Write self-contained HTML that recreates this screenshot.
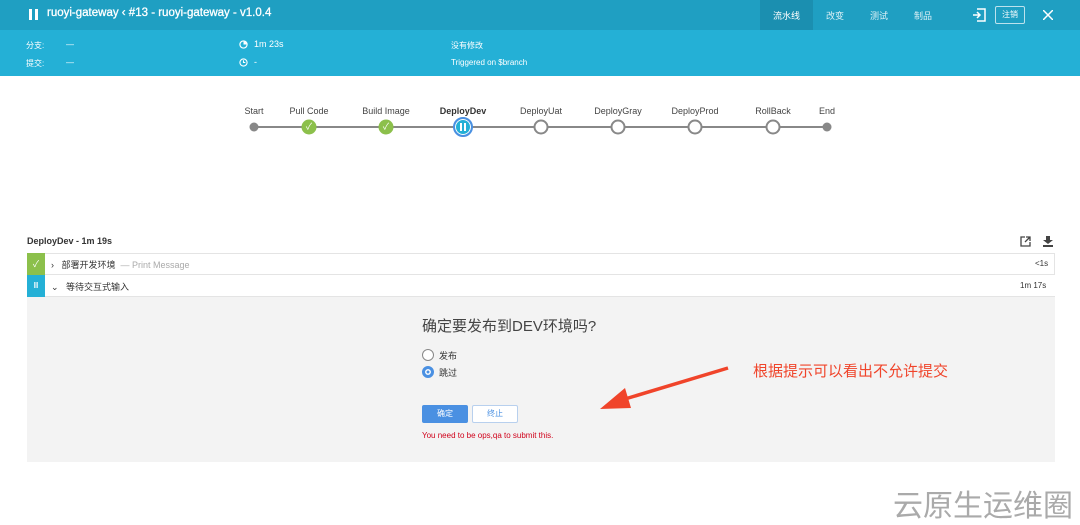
<!DOCTYPE html>
<html><head><meta charset="utf-8"><style>
*{margin:0;padding:0;box-sizing:border-box}
body{width:1080px;height:519px;background:#fff;font-family:"Liberation Sans","Noto Sans CJK SC",sans-serif;position:relative;overflow:hidden;color:#333}
.a{position:absolute;white-space:nowrap}
.top{position:absolute;left:0;top:0;width:1080px;height:30px;background:#1f9fc2}
.sub{position:absolute;left:0;top:30px;width:1080px;height:46px;background:#24b0d6}
.w{color:#fff}
.lbl{font-size:9px;color:#444;transform:translateX(-50%)}
.n{position:absolute;border-radius:50%;transform:translate(-50%,-50%)}
</style></head><body>
<div class="top"></div>
<div class="a" style="left:760px;top:0;width:53px;height:30px;background:#1b8fb0"></div>
<div class="sub"></div>
<div class="a" style="left:29px;top:9px;width:3px;height:11px;background:#fff"></div>
<div class="a" style="left:35px;top:9px;width:3px;height:11px;background:#fff"></div>
<div class="a w" style="left:47px;top:7px;font-size:11.5px;-webkit-text-stroke:0.3px #fff">ruoyi-gateway &lsaquo; #13 - ruoyi-gateway - v1.0.4</div>
<div class="a w" style="left:773px;top:9px;font-size:9px">流水线</div>
<div class="a w" style="left:826px;top:9px;font-size:9px;opacity:.85">改变</div>
<div class="a w" style="left:870px;top:9px;font-size:9px;opacity:.85">测试</div>
<div class="a w" style="left:914px;top:9px;font-size:9px;opacity:.85">制品</div>
<svg class="a" style="left:972px;top:8px" width="14" height="14" viewBox="0 0 14 14" fill="none" stroke="#fff" stroke-width="1.5"><path d="M5 1h8v12H5M1 7h7M5 4l3 3-3 3"/></svg>
<div class="a w" style="left:995px;top:6px;width:30px;height:18px;border:1px solid rgba(255,255,255,.7);border-radius:2px;font-size:8px;text-align:center;line-height:16px">注销</div>
<svg class="a" style="left:1043px;top:10px" width="10" height="10" viewBox="0 0 10 10" stroke="#fff" stroke-width="1.5"><path d="M0 0L10 10M10 0L0 10"/></svg>
<div class="a w" style="left:26px;top:40px;font-size:8px">分支:</div>
<div class="a w" style="left:66px;top:40px;font-size:8px">—</div>
<div class="a w" style="left:26px;top:58px;font-size:8px">提交:</div>
<div class="a w" style="left:66px;top:58px;font-size:8px">—</div>
<svg class="a" style="left:239px;top:40px" width="9" height="9" viewBox="0 0 10 10"><circle cx="5" cy="5" r="4" fill="none" stroke="#fff" stroke-width="1.3"/><path d="M5 5V1.5A3.5 3.5 0 0 1 8.5 5z" fill="#fff"/></svg>
<div class="a w" style="left:254px;top:39px;font-size:9px">1m 23s</div>
<svg class="a" style="left:239px;top:58px" width="9" height="9" viewBox="0 0 10 10" fill="none" stroke="#fff" stroke-width="1.2"><circle cx="5" cy="5" r="4"/><path d="M5 2.5V5h2"/></svg>
<div class="a w" style="left:254px;top:57px;font-size:9px">-</div>
<div class="a w" style="left:451px;top:40px;font-size:8px">没有修改</div>
<div class="a w" style="left:451px;top:58px;font-size:8px">Triggered on $branch</div>

<div class="a" style="left:254px;top:126px;width:573px;height:2px;background:#888"></div>
<div class="a lbl" style="left:254px;top:106px">Start</div>
<div class="a lbl" style="left:309px;top:106px">Pull Code</div>
<div class="a lbl" style="left:386px;top:106px">Build Image</div>
<div class="a lbl" style="left:463px;top:106px;font-weight:bold;color:#333">DeployDev</div>
<div class="a lbl" style="left:541px;top:106px">DeployUat</div>
<div class="a lbl" style="left:618px;top:106px">DeployGray</div>
<div class="a lbl" style="left:695px;top:106px">DeployProd</div>
<div class="a lbl" style="left:773px;top:106px">RollBack</div>
<div class="a lbl" style="left:827px;top:106px">End</div>
<div class="n" style="left:254px;top:127px;width:9px;height:9px;background:#888"></div>
<div class="n" style="left:827px;top:127px;width:9px;height:9px;background:#888"></div>
<div class="n" style="left:309px;top:127px;width:15px;height:15px;background:#8cc04b;color:#fff;font-size:9px;text-align:center;line-height:15px">✓</div>
<div class="n" style="left:386px;top:127px;width:15px;height:15px;background:#8cc04b;color:#fff;font-size:9px;text-align:center;line-height:15px">✓</div>
<div class="n" style="left:463px;top:127px;width:20px;height:20px;background:#24b0d6;border:2px solid #4a90e2;box-shadow:0 0 0 1px #fff inset"></div>
<div class="a" style="left:460px;top:123px;width:2px;height:8px;background:#fff"></div>
<div class="a" style="left:464px;top:123px;width:2px;height:8px;background:#fff"></div>
<div class="n" style="left:541px;top:127px;width:15px;height:15px;background:#fff;border:2px solid #888"></div>
<div class="n" style="left:618px;top:127px;width:15px;height:15px;background:#fff;border:2px solid #888"></div>
<div class="n" style="left:695px;top:127px;width:15px;height:15px;background:#fff;border:2px solid #888"></div>
<div class="n" style="left:773px;top:127px;width:15px;height:15px;background:#fff;border:2px solid #888"></div>

<div class="a" style="left:27px;top:236px;font-size:9px;font-weight:bold">DeployDev - 1m 19s</div>
<svg class="a" style="left:1020px;top:236px" width="11" height="11" viewBox="0 0 11 11" fill="none" stroke="#444" stroke-width="1.3"><path d="M5 1H1v9h9V6M6 1h4v4M10 1L5 6"/></svg>
<svg class="a" style="left:1043px;top:236px" width="10" height="11" viewBox="0 0 10 11" fill="#444"><path d="M3 0h4v4h3L5 8 0 4h3zM0 9h10v2H0z"/></svg>
<div class="a" style="left:27px;top:253px;width:1028px;height:22px;border:1px solid #e4e4e4;border-left:none"></div>
<div class="a" style="left:27px;top:253px;width:18px;height:22px;background:#8cc04b;color:#fff;font-size:9px;text-align:center;line-height:22px">✓</div>
<div class="a" style="left:51px;top:258px;font-size:9px">›&nbsp;&nbsp; 部署开发环境 <span style="color:#aaa">&nbsp;— Print Message</span></div>
<div class="a" style="left:1035px;top:259px;font-size:8px">&lt;1s</div>
<div class="a" style="left:27px;top:275px;width:1028px;height:22px;border-bottom:1px solid #e4e4e4"></div>
<div class="a" style="left:27px;top:275px;width:18px;height:22px;background:#24b0d6;color:#fff;font-size:8px;text-align:center;line-height:22px;font-weight:bold">II</div>
<div class="a" style="left:51px;top:280px;font-size:9px">⌄&nbsp;&nbsp; 等待交互式输入</div>
<div class="a" style="left:1020px;top:281px;font-size:8px">1m 17s</div>
<div class="a" style="left:27px;top:297px;width:1028px;height:165px;background:#f3f3f3"></div>
<div class="a" style="left:422px;top:315px;font-size:15px;color:#444">确定要发布到DEV环境吗?</div>
<div class="a" style="left:422px;top:349px;width:12px;height:12px;border-radius:50%;border:1px solid #888;background:#fff"></div>
<div class="a" style="left:439px;top:349px;font-size:9px">发布</div>
<div class="a" style="left:422px;top:366px;width:12px;height:12px;border-radius:50%;background:#4a90e2;border:3.5px solid #4a90e2;box-shadow:inset 0 0 0 1.5px #fff"></div>
<div class="a" style="left:439px;top:366px;font-size:9px">跳过</div>
<div class="a" style="left:422px;top:405px;width:46px;height:18px;background:#4a90e2;border-radius:2px;color:#fff;font-size:8px;text-align:center;line-height:18px">确定</div>
<div class="a" style="left:472px;top:405px;width:46px;height:18px;background:#fff;border:1px solid #b8d0ee;border-radius:2px;color:#4a90e2;font-size:8px;text-align:center;line-height:16px">终止</div>
<div class="a" style="left:422px;top:431px;font-size:8px;color:#d0021b">You need to be ops,qa to submit this.</div>
<svg class="a" style="left:595px;top:362px" width="140" height="55" viewBox="0 0 140 55"><path d="M133 6L30 37" stroke="#f0442a" stroke-width="3.5"/><path d="M5 47L30 26 36 46z" fill="#f0442a"/></svg>
<div class="a" style="left:753px;top:360px;font-size:15px;color:#f0442a">根据提示可以看出不允许提交</div>
<div class="a" style="left:893px;top:481px;font-size:30px;color:#aaa">云原生运维圈</div>
</body></html>
